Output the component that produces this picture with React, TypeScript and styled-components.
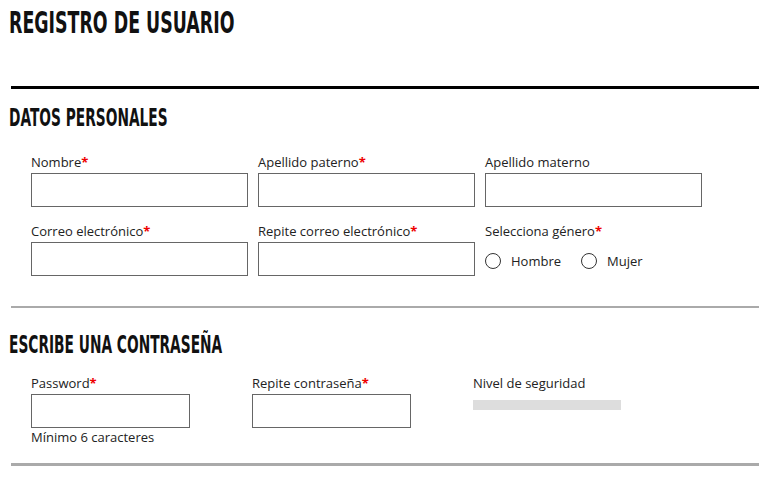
import React from "react";
import styled, { createGlobalStyle } from "styled-components";

const GlobalStyle = createGlobalStyle`
  html, body {
    margin: 0;
    padding: 0;
    background: #fff;
  }
  body {
    font-family: "Open Sans", "Liberation Sans", sans-serif;
    font-size: 13px;
    color: #222;
  }
`;

const Page = styled.div`
  width: 770px;
  padding: 0 11px;
  box-sizing: border-box;
`;

// condensed display face: no narrow font installed, so squeeze DejaVu bold
const Title = styled.h1`
  margin: 0 0 0 -2px;
  padding-top: 6px;
  height: 86px;
  box-sizing: border-box;
  font-family: "DejaVu Sans", "Liberation Sans", sans-serif;
  font-weight: bold;
  font-size: 30px;
  line-height: 34px;
  color: #111;
  transform: scaleX(0.58);
  transform-origin: left top;
  white-space: nowrap;
`;

const Rule = styled.hr<{ $dark?: boolean; $size?: number }>`
  margin: 0;
  border: none;
  height: ${({ $size }) => $size ?? 3}px;
  background: ${({ $dark }) => ($dark ? "#000" : "#aaa")};
`;

const Section = styled.section<{ $top: number }>`
  padding-top: ${({ $top }) => $top}px;
`;

const SectionTitle = styled.h2<{ $gap: number }>`
  margin: 0 0 ${({ $gap }) => $gap}px -2px;
  font-family: "DejaVu Sans", "Liberation Sans", sans-serif;
  font-weight: bold;
  font-size: 25px;
  line-height: 28px;
  color: #111;
  transform: scaleX(0.55);
  transform-origin: left top;
  white-space: nowrap;
`;

const Grid = styled.div<{ $col: number; $gap: number; $bottom: number }>`
  display: grid;
  grid-template-columns: repeat(3, ${({ $col }) => $col}px);
  column-gap: ${({ $gap }) => $gap}px;
  row-gap: 15px;
  padding-left: 20px;
  padding-bottom: ${({ $bottom }) => $bottom}px;
`;

const Field = styled.div`
  display: flex;
  flex-direction: column;
`;

const Label = styled.label`
  display: block;
  line-height: 18px;
  height: 20px;
  color: #222;
`;

const Req = styled.span`
  color: #e00;
  font-weight: bold;
`;

const Input = styled.input`
  box-sizing: border-box;
  width: 100%;
  height: 34px;
  margin: 0;
  border: 1px solid #666;
  padding: 4px 6px;
  font: inherit;
  background: #fff;
  outline: none;
`;

const Hint = styled.div`
  line-height: 18px;
`;

const Radios = styled.div`
  display: flex;
  align-items: center;
  gap: 20px;
  margin-top: 10px;
  line-height: 18px;
`;

const RadioOption = styled.label`
  display: flex;
  align-items: center;
  gap: 10px;
`;

const RadioCircle = styled.span`
  width: 16px;
  height: 16px;
  border: 1px solid #333;
  border-radius: 50%;
  box-sizing: border-box;
`;

const Meter = styled.div`
  width: 148px;
  height: 10px;
  background: #ddd;
  margin-top: 6px;
`;

const Required = ({ children }: { children: React.ReactNode }) => (
  <Label>
    {children}
    <Req>*</Req>
  </Label>
);

export default function App() {
  return (
    <Page>
      <GlobalStyle />
      <Title>REGISTRO DE USUARIO</Title>
      <Rule $dark />
      <Section $top={15}>
        <SectionTitle $gap={21}>DATOS PERSONALES</SectionTitle>
        <Grid $col={217} $gap={10} $bottom={30}>
          <Field>
            <Required>Nombre</Required>
            <Input />
          </Field>
          <Field>
            <Required>Apellido paterno</Required>
            <Input />
          </Field>
          <Field>
            <Label>Apellido materno</Label>
            <Input />
          </Field>
          <Field>
            <Required>Correo electrónico</Required>
            <Input />
          </Field>
          <Field>
            <Required>Repite correo electrónico</Required>
            <Input />
          </Field>
          <Field>
            <Required>Selecciona género</Required>
            <Radios>
              <RadioOption>
                <RadioCircle />
                Hombre
              </RadioOption>
              <RadioOption>
                <RadioCircle />
                Mujer
              </RadioOption>
            </Radios>
          </Field>
        </Grid>
      </Section>
      <Rule $size={2} />
      <Section $top={23}>
        <SectionTitle $gap={15}>ESCRIBE UNA CONTRASEÑA</SectionTitle>
        <Grid $col={159} $gap={62} $bottom={17}>
          <Field>
            <Required>Password</Required>
            <Input />
            <Hint>Mínimo 6 caracteres</Hint>
          </Field>
          <Field>
            <Required>Repite contraseña</Required>
            <Input />
          </Field>
          <Field>
            <Label>Nivel de seguridad</Label>
            <Meter />
          </Field>
        </Grid>
      </Section>
      <Rule />
    </Page>
  );
}
